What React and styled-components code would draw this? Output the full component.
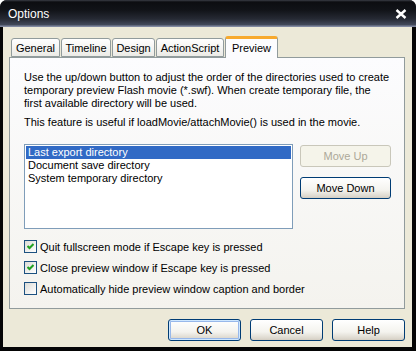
import React from "react";
import styled, { createGlobalStyle } from "styled-components";

const GlobalStyle = createGlobalStyle`
  html, body {
    margin: 0;
    padding: 0;
    background: #ffffff;
  }
  body {
    font-family: Tahoma, "Liberation Sans", Arial, sans-serif;
    font-size: 11px;
    color: #000;
  }
`;

const Window = styled.div`
  width: 416px;
  height: 351px;
  box-sizing: border-box;
  display: flex;
  flex-direction: column;
  background: #050505;
  border-radius: 7px 7px 0 0;
  overflow: hidden;
`;

const TitleBar = styled.div`
  height: 27px;
  flex: none;
  display: flex;
  align-items: center;
  justify-content: space-between;
  padding: 0 9px 0 8px;
  background: linear-gradient(
    #3a3d46 0px,
    #0c0d11 2px,
    #111318 10px,
    #262a34 19px,
    #434a5c 25px,
    #8088a0 26px,
    #8088a0 27px
  );
`;

const Title = styled.span`
  color: #ffffff;
  font-size: 12px;
  padding-top: 1px;
`;

const Client = styled.div`
  flex: 1;
  margin: 0 4px 4px 3px;
  background: #ece9d8;
  display: flex;
  flex-direction: column;
  padding: 9px 7px 0 6px;
`;

const TabRow = styled.div`
  display: flex;
  align-items: flex-end;
  height: 21px;
  padding-left: 2px;
  position: relative;
  z-index: 1;
`;

const Tab = styled.div`
  box-sizing: border-box;
  width: ${(p) => p.w}px;
  height: ${(p) => (p.active ? 22 : 19)}px;
  margin-right: 1px;
  margin-bottom: ${(p) => (p.active ? -1 : 0)}px;
  border: 1px solid #919b9c;
  border-bottom: ${(p) => (p.active ? "none" : "1px solid #919b9c")};
  border-radius: 3px 3px 0 0;
  display: flex;
  align-items: center;
  justify-content: center;
  padding-bottom: ${(p) => (p.active ? 2 : 0)}px;
  background: ${(p) =>
    p.active ? "#fcfcfe" : "linear-gradient(#ffffff, #ecebe6)"};
  border-top: ${(p) => (p.active ? "3px solid #f7a92d" : "1px solid #919b9c")};
  font-size: 11px;
`;

const Panel = styled.div`
  box-sizing: border-box;
  height: 252px;
  border: 1px solid #919b9c;
  border-top-color: #919b9c;
  background: linear-gradient(#fcfcfe, #f4f3ee);
  padding: 13px 13px 0 14px;
  display: flex;
  flex-direction: column;
`;

const Para = styled.p`
  margin: 0 0 ${(p) => p.mb}px;
  line-height: 13px;
`;

const ListArea = styled.div`
  display: flex;
  gap: 7px;
  margin-bottom: 11px;
`;

const ListBox = styled.div`
  box-sizing: border-box;
  width: 270px;
  height: 85px;
  border: 1px solid #7f9db9;
  background: #ffffff;
  padding: 1px;
`;

const ListItem = styled.div`
  height: 13px;
  line-height: 13px;
  padding-left: 2px;
  background: ${(p) => (p.selected ? "#316ac5" : "transparent")};
  color: ${(p) => (p.selected ? "#ffffff" : "#000000")};
`;

const SideButtons = styled.div`
  display: flex;
  flex-direction: column;
  gap: 10px;
  padding-top: 1px;
`;

const Button = styled.button`
  box-sizing: border-box;
  width: ${(p) => p.w || 73}px;
  height: 22px;
  padding: 0;
  font-family: inherit;
  font-size: 11px;
  color: #000;
  border: 1px solid #003c74;
  border-radius: 3px;
  background: linear-gradient(#ffffff 0%, #f4f3ee 60%, #d6d0c5 100%);
  box-shadow: ${(p) =>
    p.isDefault
      ? "inset 0 0 0 1px #cee7ff, inset 0 0 0 2px #98b8ea"
      : "inset 0 -1px 0 #d6d0c5"};

  &:disabled {
    border-color: #c9c7ba;
    background: #f5f4ea;
    color: #aca899;
    box-shadow: none;
  }
`;

const CheckRow = styled.label`
  display: flex;
  align-items: center;
  gap: 3px;
  height: 13px;
  margin-bottom: 8px;
`;

const Box = styled.span`
  box-sizing: border-box;
  width: 13px;
  height: 13px;
  border: 1px solid #1c5180;
  background: linear-gradient(135deg, #dcdcd7, #ffffff);
  display: flex;
  align-items: center;
  justify-content: center;
`;

const Footer = styled.div`
  display: flex;
  justify-content: flex-end;
  gap: 9px;
  padding: 10px 0 0;
`;

const Check = ({ checked, children }) => (
  <CheckRow>
    <Box>
      {checked && (
        <svg width="7" height="7" viewBox="0 0 7 7">
          <path
            d="M0.5 3 L2.5 5 L6.5 1"
            fill="none"
            stroke="#21a121"
            strokeWidth="2"
          />
        </svg>
      )}
    </Box>
    <span>{children}</span>
  </CheckRow>
);

const tabs = [
  { label: "General", w: 49 },
  { label: "Timeline", w: 50 },
  { label: "Design", w: 43 },
  { label: "ActionScript", w: 68 },
  { label: "Preview", w: 53, active: true },
];

export default function App() {
  return (
    <>
      <GlobalStyle />
      <Window>
        <TitleBar>
          <Title>Options</Title>
          <svg width="12" height="10" viewBox="0 0 12 10">
            <path
              d="M1.5 1 L10.5 9 M10.5 1 L1.5 9"
              stroke="#ffffff"
              strokeWidth="2.4"
            />
          </svg>
        </TitleBar>
        <Client>
          <TabRow>
            {tabs.map((t) => (
              <Tab key={t.label} w={t.w} active={t.active}>
                {t.label}
              </Tab>
            ))}
          </TabRow>
          <Panel>
            <Para mb={6}>
              Use the up/down button to adjust the order of the directories
              used to create temporary preview Flash movie (*.swf). When create
              temporary file, the first available directory will be used.
            </Para>
            <Para mb={15}>
              This feature is useful if loadMovie/attachMovie() is used in the
              movie.
            </Para>
            <ListArea>
              <ListBox>
                <ListItem selected>Last export directory</ListItem>
                <ListItem>Document save directory</ListItem>
                <ListItem>System temporary directory</ListItem>
              </ListBox>
              <SideButtons>
                <Button w={91} disabled>
                  Move Up
                </Button>
                <Button w={91}>Move Down</Button>
              </SideButtons>
            </ListArea>
            <Check checked>Quit fullscreen mode if Escape key is pressed</Check>
            <Check checked>Close preview window if Escape key is pressed</Check>
            <Check>Automatically hide preview window caption and border</Check>
          </Panel>
          <Footer>
            <Button isDefault>OK</Button>
            <Button>Cancel</Button>
            <Button>Help</Button>
          </Footer>
        </Client>
      </Window>
    </>
  );
}
